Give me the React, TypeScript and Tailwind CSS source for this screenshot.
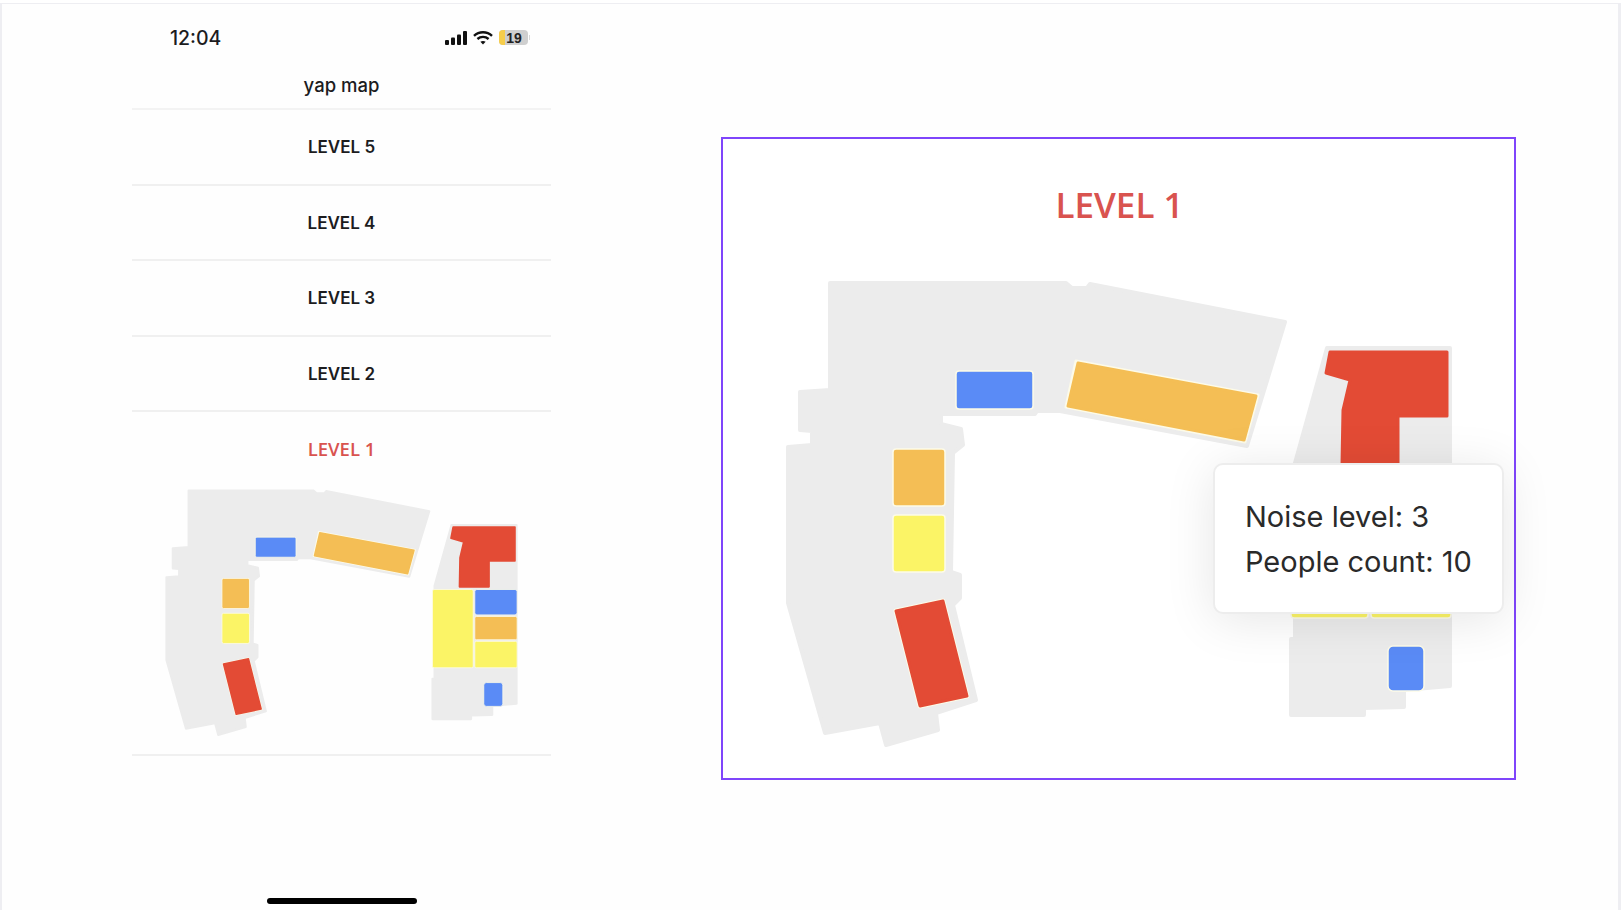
const rooms = {
  red: '#e34b35',
  orange: '#f4be55',
  yellow: '#fbf466',
  blue: '#5a8bf6',
}

const levels = ['LEVEL 5', 'LEVEL 4', 'LEVEL 3', 'LEVEL 2']

function FloorPlan({ className }: { className: string }) {
  return (
    <svg viewBox="786 280 666 467" className={className}>
      <g fill="#ececec" stroke="#ececec" strokeWidth="4" strokeLinejoin="round">
        <polygon points="830,283 1066,283 1072,288 1087,288 1090,284 1285,322 1247,446 1060,411 1037,411 1035,414 941,414 941,424 961,429 963,445 953,453 951,572 960,575 960,598 953,605 976,700 936,713 938,730 886,745 880,723 825,733 788,603 788,447 812,445 812,431 800,430 800,392 830,390" />
        <polygon points="1327,348 1450,348 1450,686 1404,690 1404,707 1364,708 1364,715 1291,715 1291,639 1295,639 1295,463" />
      </g>
      <g strokeLinejoin="round">
        <rect x="956" y="371" width="77" height="38" rx="3" fill={rooms.blue} stroke="#fdfbe8" strokeWidth="1.5" />
        <polygon points="1076,361 1258,395 1245,442 1066,407" fill="#fdfbe8" stroke="#fdfbe8" strokeWidth="3" />
        <polygon points="1078,363 1256,396 1244,440 1068,406" fill={rooms.orange} stroke={rooms.orange} strokeWidth="3" />
        <rect x="893" y="449" width="52" height="57" rx="3" fill={rooms.orange} stroke="#fdfbe8" strokeWidth="1.5" />
        <rect x="893" y="515" width="52" height="57" rx="3" fill={rooms.yellow} stroke="#fdfbe8" strokeWidth="1.5" />
        <polygon points="896,611 943,601 967,696 920,706" fill={rooms.red} stroke="#fdfbe8" strokeWidth="5" />
        <polygon points="896,611 943,601 967,696 920,706" fill={rooms.red} stroke={rooms.red} strokeWidth="3" />
        <polygon points="1330,352 1447,352 1447,416 1398,416 1398,465 1342,465 1343,410 1350,380 1326,373" fill={rooms.red} stroke={rooms.red} strokeWidth="3" />
        <rect x="1291" y="470" width="77" height="148" rx="3" fill={rooms.yellow} stroke="#fdfbe8" strokeWidth="1.5" />
        <rect x="1371" y="470" width="80" height="48" rx="4" fill={rooms.blue} stroke="#fdfbe8" strokeWidth="1.5" />
        <rect x="1371" y="521" width="80" height="44" rx="3" fill={rooms.orange} stroke="#fdfbe8" strokeWidth="1.5" />
        <rect x="1371" y="568" width="80" height="50" rx="3" fill={rooms.yellow} stroke="#fdfbe8" strokeWidth="1.5" />
        <rect x="1388" y="646" width="36" height="45" rx="5" fill={rooms.blue} stroke="#fdfbe8" strokeWidth="1.5" />
      </g>
    </svg>
  )
}

function StatusIcons() {
  return (
    <div className="flex items-center">
      <svg width="22" height="14" viewBox="0 0 22 14" fill="#111111">
        <rect x="0" y="9" width="4" height="5" rx="1" />
        <rect x="6" y="6.5" width="4" height="7.5" rx="1" />
        <rect x="12" y="3.5" width="4" height="10.5" rx="1" />
        <rect x="18" y="0" width="4" height="14" rx="1" />
      </svg>
      <svg width="20" height="14" viewBox="0 0 20 14" className="ml-[6px]" fill="none" stroke="#111111" strokeWidth="2.4">
        <path d="M1 4.8 C6 0 14 0 19 4.8" />
        <path d="M4.4 8 C7.6 5.2 12.4 5.2 15.6 8" />
        <path d="M10 13.6 L7.4 10.8 C8.8 9.6 11.2 9.6 12.6 10.8 Z" fill="#111111" stroke="none" />
      </svg>
      <div className="relative ml-[6px] flex h-[15px] w-[29px] items-center justify-center overflow-hidden rounded-[4px] bg-[#cfcfcf]">
        <div className="absolute inset-y-0 left-0 w-[6px] bg-[#f6cd4b]" />
        <span className="relative pl-[1px] font-['Liberation_Sans',sans-serif] text-[14px] leading-none font-bold text-[#222222]">
          19
        </span>
      </div>
      <div className="ml-[1px] h-[5px] w-[1px] bg-[#d8d8d8]" />
    </div>
  )
}

export default function App() {
  return (
    <div className="h-[910px] w-[1624px] overflow-hidden bg-white pt-[3px] font-['Inter',sans-serif]">
      <div className="mr-[3px] flex h-[907px] border-t border-r-[3px] border-l-2 border-[#eeeef2] bg-[#fefefe]">
        <div className="ml-[130px] flex h-full w-[419px] flex-col">
          <div className="flex h-[56px] shrink-0 items-center justify-between pt-[11px] pr-[21px] pl-[38px]">
            <span className="mt-[2px] text-[19.5px] leading-none font-medium text-[#1c1c1e]">12:04</span>
            <StatusIcons />
          </div>
          <div className="flex h-[50px] shrink-0 items-center justify-center border-b-2 border-[#f3f3f3] pt-[3px] text-[18.5px] font-medium text-[#1c1c1e]">
            yap map
          </div>
          {levels.map((level) => (
            <div
              key={level}
              className="flex h-[75.5px] shrink-0 items-center justify-center border-b-2 border-[#f0f0f0] pt-[2px] text-[17px] font-semibold text-[#1c1c1e]">
              {level}
            </div>
          ))}
          <div className="flex h-[344px] shrink-0 flex-col border-b-2 border-[#f0f0f0]">
            <div className="mt-[25px] text-center font-['Open_Sans',sans-serif] text-[18.5px] leading-6 font-semibold text-[#d9534f]">
              LEVEL 1
            </div>
            <FloorPlan className="mt-[28px] ml-[33px] h-[247px] w-[353px]" />
          </div>
          <div className="mx-auto mt-[142px] h-[6px] w-[150px] rounded-full bg-black" />
        </div>

        <div className="relative mt-[133px] ml-[170px] h-[643px] w-[795px] shrink-0 border-2 border-[#7f45fb] bg-white">
          <h2 className="pt-[44px] pl-[2px] text-center font-['Open_Sans',sans-serif] text-[35px] leading-[44px] font-semibold text-[#d9534f]">
            LEVEL 1
          </h2>
          <FloorPlan className="mt-[53px] ml-[63px] h-[467px] w-[666px]" />
          <div className="absolute top-[324px] left-[490px] h-[151px] w-[291px] rounded-[10px] border-2 border-[#ededed] bg-white pt-[29px] pl-[30px] text-[29px] leading-[45px] text-[#2a2a2a] shadow-[0_6px_50px_rgba(0,0,0,0.1)]">
            <div>Noise level: 3</div>
            <div>People count: 10</div>
          </div>
        </div>
      </div>
    </div>
  )
}
